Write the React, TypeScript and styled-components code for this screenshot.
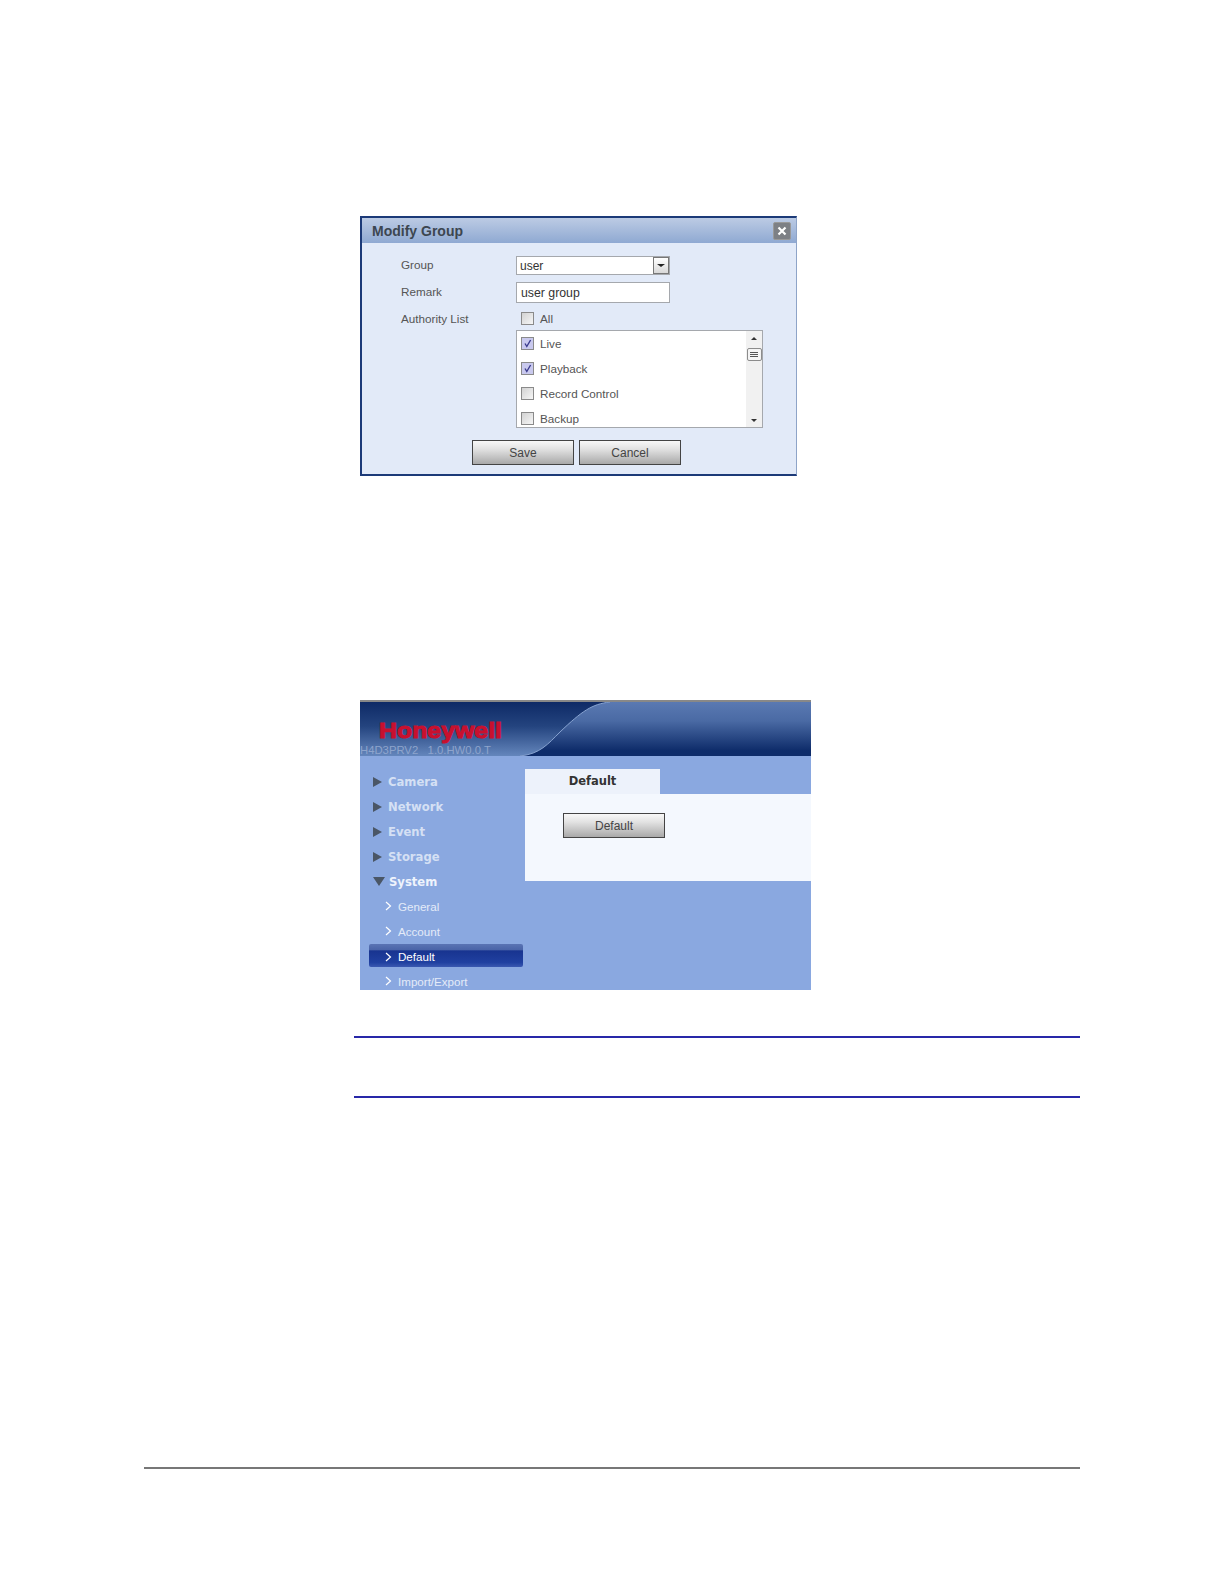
import { createGlobalStyle, styled } from "styled-components"

const GlobalStyle = createGlobalStyle`
  html, body {
    margin: 0;
    padding: 0;
    background: #fff;
  }
  body {
    font-family: "Liberation Sans", Arial, sans-serif;
    color: #444;
  }
`

const Page = styled.div`
  width: 1224px;
  height: 1584px;
  box-sizing: border-box;
  padding-top: 216px;
  overflow: hidden;
  display: flex;
  flex-direction: column;
`

const Dialog = styled.div`
  box-sizing: border-box;
  width: 437px;
  height: 260px;
  margin-left: 360px;
  flex-shrink: 0;
  background: #e2eaf8;
  border: 1px solid #8ea4c8;
  border-left: 2px solid #1c3a78;
  border-top: 2px solid #1c3a78;
  border-bottom: 2px solid #1c3a78;
`

const DialogHeader = styled.div`
  height: 25px;
  padding: 0 5px 0 10px;
  display: flex;
  align-items: center;
  justify-content: space-between;
  background: linear-gradient(#bccbe4, #8fa9d2);
  font-size: 14px;
  font-weight: bold;
  color: #3c4650;
`

const CloseButton = styled.span`
  width: 18px;
  height: 18px;
  border-radius: 2px;
  background: #7d8085;
  border: 1px solid #999;
  box-sizing: border-box;
  display: flex;
  align-items: center;
  justify-content: center;
`

const Form = styled.div`
  display: grid;
  grid-template-columns: 115px 247px;
  grid-template-rows: 26px 28px 20px 98px;
  padding: 13px 0 0 39px;
  font-size: 11.7px;
`

const Label = styled.div<{ $h: number }>`
  height: ${({ $h }) => $h}px;
  display: flex;
  align-items: center;
  color: #555;
`

const SelectBox = styled.div`
  box-sizing: border-box;
  width: 154px;
  height: 19px;
  background: #fff;
  border: 1px solid #a5a8ad;
  padding-left: 3px;
  display: flex;
  align-items: center;
  justify-content: space-between;
  font-size: 12px;
  color: #333;
`

const SelectArrow = styled.span`
  width: 16px;
  height: 17px;
  box-sizing: border-box;
  border: 1px solid #777;
  background: linear-gradient(#fff, #d8d8d8);
  display: flex;
  align-items: center;
  justify-content: center;
  &::after {
    content: "";
    border-left: 4px solid transparent;
    border-right: 4px solid transparent;
    border-top: 3px solid #222;
  }
`

const TextInput = styled.div`
  box-sizing: border-box;
  width: 154px;
  height: 21px;
  background: #fff;
  border: 1px solid #a5a8ad;
  padding-left: 4px;
  display: flex;
  align-items: center;
  font-size: 12.3px;
  color: #333;
`

const CheckRow = styled.div<{ $h: number; $pad: number }>`
  height: ${({ $h }) => $h}px;
  padding-left: ${({ $pad }) => $pad}px;
  display: flex;
  align-items: center;
  gap: 6px;
  font-size: 11.7px;
  color: #555;
  flex-shrink: 0;
`

const Check = styled.span<{ $on?: boolean }>`
  width: 13px;
  height: 13px;
  box-sizing: border-box;
  border: 1px solid #8a8a8a;
  background: ${({ $on }) => ($on ? "#c9c9ee" : "linear-gradient(135deg, #d2d2d2, #f6f6f6)")};
  display: flex;
  align-items: center;
  justify-content: center;
`

const ListBox = styled.div`
  box-sizing: border-box;
  width: 247px;
  height: 98px;
  background: #fff;
  border: 1px solid #a5a8ad;
  display: flex;
  overflow: hidden;
`

const ListItems = styled.div`
  flex: 1;
  display: flex;
  flex-direction: column;
`

const ScrollBar = styled.div`
  width: 16px;
  background: #f1f1f1;
  display: flex;
  flex-direction: column;
  align-items: center;
`

const ScrollArrow = styled.span<{ $down?: boolean }>`
  margin-top: ${({ $down }) => ($down ? "auto" : "6px")};
  margin-bottom: ${({ $down }) => ($down ? "5px" : "8px")};
  border-left: 3px solid transparent;
  border-right: 3px solid transparent;
  border-bottom: ${({ $down }) => ($down ? "0" : "3px solid #333")};
  border-top: ${({ $down }) => ($down ? "3px solid #333" : "0")};
`

const ScrollThumb = styled.span`
  box-sizing: border-box;
  width: 15px;
  height: 13px;
  background: #f4f4f4;
  border: 1px solid #8c8c8c;
  border-radius: 2px;
  display: flex;
  flex-direction: column;
  justify-content: center;
  align-items: center;
  gap: 1px;
  & > i {
    display: block;
    width: 8px;
    height: 1px;
    background: #555;
  }
`

const DialogButtons = styled.div`
  display: flex;
  gap: 5px;
  margin: 12px 0 0 110px;
`

const GreyButton = styled.div`
  box-sizing: border-box;
  width: 102px;
  height: 25px;
  border: 1px solid #444;
  background: linear-gradient(#f8f8f8, #e2e2e2 35%, #a9a9a9);
  display: flex;
  align-items: center;
  justify-content: center;
  font-size: 12px;
  color: #444;
`

const WebUi = styled.div`
  box-sizing: border-box;
  width: 451px;
  height: 290px;
  margin: 224px 0 0 360px;
  background: #8aa8e0;
  border-top: 2px solid #888;
  overflow: hidden;
  flex-shrink: 0;
`

const Banner = styled.div`
  position: relative;
  height: 54px;
  background: linear-gradient(#5a79b2, #4a6aa4 35%, #0e2c6a 90%);
  overflow: hidden;
`

const BannerArt = styled.svg`
  position: absolute;
  inset: 0;
`

const Logo = styled.div`
  position: absolute;
  left: 19px;
  top: 16px;
  font-size: 22px;
  font-weight: bold;
  letter-spacing: 0;
  color: #c8102e;
  transform: scaleX(1.13);
  transform-origin: left;
  -webkit-text-stroke: 1.1px #c8102e;
`

const Version = styled.div`
  position: absolute;
  left: 0;
  top: 42px;
  font-size: 11.3px;
  white-space: pre;
  color: #8ea4cc;
`

const Body = styled.div`
  display: flex;
`

const Sidebar = styled.div`
  width: 165px;
  padding: 13.5px 2px 0 9px;
  box-sizing: border-box;
  flex-shrink: 0;
`

const MainItem = styled.div<{ $open?: boolean }>`
  height: 24.9px;
  padding-left: 4px;
  display: flex;
  align-items: center;
  gap: ${({ $open }) => ($open ? "4px" : "6px")};
  font-family: "DejaVu Sans", sans-serif;
  font-size: 11.6px;
  font-weight: bold;
  color: ${({ $open }) => ($open ? "#eef3fc" : "#d5e0f4")};
`

const RightTriangle = styled.span`
  width: 0;
  height: 0;
  border-top: 5px solid transparent;
  border-bottom: 5px solid transparent;
  border-left: 9px solid #4a5666;
`

const DownTriangle = styled.span`
  width: 0;
  height: 0;
  border-left: 6px solid transparent;
  border-right: 6px solid transparent;
  border-top: 9px solid #4a5666;
`

const SubItem = styled.div<{ $active?: boolean }>`
  height: ${({ $active }) => ($active ? "23px" : "24.9px")};
  margin: ${({ $active }) => ($active ? "0.5px 0 1.4px" : "0")};
  padding: ${({ $active }) => ($active ? "2px 0 0 16px" : "0 0 0 16px")};
  box-sizing: border-box;
  display: flex;
  align-items: center;
  gap: 6px;
  font-size: 11.6px;
  color: ${({ $active }) => ($active ? "#fff" : "#e4ebf8")};
  border-radius: 2px;
  background: ${({ $active }) =>
    $active ? "linear-gradient(#5a74b4, #4a64a8 25%, #183490 30%, #2040a0 80%, #3a58b0)" : "none"};
`

const Content = styled.div`
  flex: 1;
  padding-top: 13px;
`

const Tab = styled.div`
  box-sizing: border-box;
  width: 135px;
  height: 25px;
  padding-bottom: 2px;
  background: #edf2fb;
  display: flex;
  align-items: center;
  justify-content: center;
  font-family: "DejaVu Sans", sans-serif;
  font-size: 11.5px;
  font-weight: bold;
  color: #333;
`

const TabPanel = styled.div`
  height: 87px;
  background: #f4f8fe;
  box-sizing: border-box;
  padding: 19px 0 0 38px;
`

const NoteRules = styled.div`
  box-sizing: border-box;
  width: 726px;
  height: 62px;
  margin: 46px 0 0 354px;
  border-top: 2px solid #2828a8;
  border-bottom: 2px solid #2828a8;
  flex-shrink: 0;
`

const FooterRule = styled.div`
  width: 936px;
  height: 2px;
  margin: 369px 0 0 144px;
  background: #777;
  flex-shrink: 0;
`

const Tick = () => (
  <svg width="11" height="11" viewBox="0 0 11 11">
    <path d="M3 5.5 L4.8 8.5 L8.6 2" fill="none" stroke="#3a3a8c" strokeWidth="1.4" />
  </svg>
)

const Chevron = () => (
  <svg width="7" height="10" viewBox="0 0 7 10">
    <path d="M1 1 L5.5 5 L1 9" fill="none" stroke="#fff" strokeWidth="1.2" />
  </svg>
)

const App = () => (
  <>
    <GlobalStyle />
    <Page>
      <Dialog>
        <DialogHeader>
          Modify Group
          <CloseButton>
            <svg width="10" height="10" viewBox="0 0 10 10">
              <path d="M1.5 1.5 L8.5 8.5 M8.5 1.5 L1.5 8.5" stroke="#fff" strokeWidth="2.2" />
            </svg>
          </CloseButton>
        </DialogHeader>
        <Form>
          <Label $h={17}>Group</Label>
          <SelectBox>
            user
            <SelectArrow />
          </SelectBox>
          <Label $h={19}>Remark</Label>
          <TextInput>user group</TextInput>
          <Label $h={16}>Authority List</Label>
          <CheckRow $h={17} $pad={5}>
            <Check />
            All
          </CheckRow>
          <div />
          <ListBox>
            <ListItems>
              <CheckRow $h={25} $pad={4}>
                <Check $on>
                  <Tick />
                </Check>
                Live
              </CheckRow>
              <CheckRow $h={25} $pad={4}>
                <Check $on>
                  <Tick />
                </Check>
                Playback
              </CheckRow>
              <CheckRow $h={25} $pad={4}>
                <Check />
                Record Control
              </CheckRow>
              <CheckRow $h={25} $pad={4}>
                <Check />
                Backup
              </CheckRow>
            </ListItems>
            <ScrollBar>
              <ScrollArrow />
              <ScrollThumb>
                <i />
                <i />
                <i />
              </ScrollThumb>
              <ScrollArrow $down />
            </ScrollBar>
          </ListBox>
        </Form>
        <DialogButtons>
          <GreyButton>Save</GreyButton>
          <GreyButton>Cancel</GreyButton>
        </DialogButtons>
      </Dialog>

      <WebUi>
        <Banner>
          <BannerArt width="451" height="54" viewBox="0 0 451 54">
            <defs>
              <linearGradient id="bannerLeft" x1="0" y1="0" x2="0" y2="1">
                <stop offset="0" stopColor="#0e2a66" />
                <stop offset="0.45" stopColor="#24447f" />
                <stop offset="1" stopColor="#6486bc" />
              </linearGradient>
            </defs>
            <path d="M0 0 H250 C232 2 222 9 200 30 C188 42 180 52 160 54 H0 Z" fill="url(#bannerLeft)" />
            <path d="M250 0 C232 2 222 9 200 30 C188 42 180 52 160 54" fill="none" stroke="#86a2d0" strokeWidth="1" />
          </BannerArt>
          <Logo>Honeywell</Logo>
          <Version>H4D3PRV2   1.0.HW0.0.T</Version>
        </Banner>
        <Body>
          <Sidebar>
            <MainItem>
              <RightTriangle />
              Camera
            </MainItem>
            <MainItem>
              <RightTriangle />
              Network
            </MainItem>
            <MainItem>
              <RightTriangle />
              Event
            </MainItem>
            <MainItem>
              <RightTriangle />
              Storage
            </MainItem>
            <MainItem $open>
              <DownTriangle />
              System
            </MainItem>
            <SubItem>
              <Chevron />
              General
            </SubItem>
            <SubItem>
              <Chevron />
              Account
            </SubItem>
            <SubItem $active>
              <Chevron />
              Default
            </SubItem>
            <SubItem>
              <Chevron />
              Import/Export
            </SubItem>
          </Sidebar>
          <Content>
            <Tab>Default</Tab>
            <TabPanel>
              <GreyButton>Default</GreyButton>
            </TabPanel>
          </Content>
        </Body>
      </WebUi>

      <NoteRules />
      <FooterRule />
    </Page>
  </>
)

export default App
